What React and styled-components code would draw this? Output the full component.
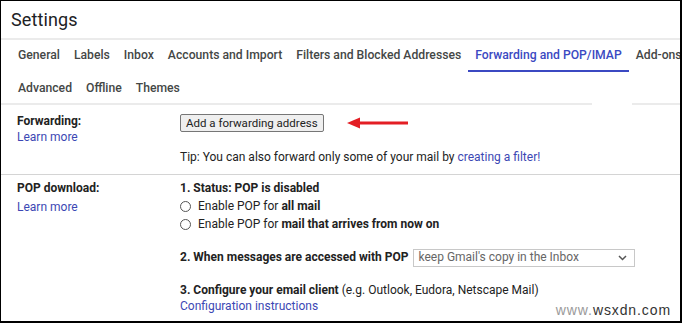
import React from "react";
import styled, { createGlobalStyle } from "styled-components";

const Global = createGlobalStyle`
  html, body { margin: 0; padding: 0; background: #fff; }
  * { box-sizing: border-box; }
  body { font-family: Roboto, "Liberation Sans", Arial, sans-serif; }
`;

const Frame = styled.div`
  position: relative;
  width: 682px;
  height: 323px;
  overflow: hidden;
  border-style: solid;
  border-color: #000;
  border-width: 1px 2px 2px 1px;
  background: #fff;
`;

const Header = styled.div`
  height: 37px;
  padding-left: 10px;
  display: flex;
  align-items: center;
  font-size: 18px;
  color: #202124;
  letter-spacing: 0.1px;
`;

const Rule = styled.div`
  height: ${(p) => p.$h || 1}px;
  background: ${(p) => p.$bg || "#ebebeb"};
`;

const TabRow = styled.div`
  display: flex;
  height: ${(p) => p.$h}px;
  padding-left: 10px;
  white-space: nowrap;
  overflow: hidden;
`;

const Tab = styled.div`
  padding: 0 7px;
  display: flex;
  align-items: center;
  font-size: 12.2px;
  font-weight: 500;
  color: ${(p) => (p.$active ? "#3b49c2" : "#444746")};
  border-bottom: 2px solid ${(p) => (p.$active ? "#3b49c2" : "transparent")};
  padding-top: ${(p) => p.$pt ?? 0}px;
`;

const Section = styled.div`
  display: grid;
  grid-template-columns: 163px 1fr;
  padding: ${(p) => p.$pad};
  padding-left: 16px;
  font-size: 12px;
  color: #222;
  border-bottom: ${(p) => (p.$border ? "1px solid #d4d4d4" : "none")};
`;

const LabelCol = styled.div`
  display: flex;
  flex-direction: column;
  gap: ${(p) => p.$gap || 0}px;
`;

const Label = styled.div`
  font-weight: 700;
  line-height: ${(p) => p.$lh || 16}px;
  color: #222;
`;

const Link = styled.a`
  color: #3c48b4;
  text-decoration: none;
  line-height: ${(p) => p.$lh || 16}px;
  display: ${(p) => (p.$inline ? "inline" : "block")};
`;

const ValueCol = styled.div`
  display: flex;
  flex-direction: column;
`;

const ButtonRow = styled.div`
  display: flex;
  align-items: center;
  margin-top: 1px;
`;

const Button = styled.button`
  height: 18px;
  padding: 0 5px;
  font-family: Roboto, "Liberation Sans", Arial, sans-serif;
  font-size: 11.5px;
  color: #222;
  background: #efefef;
  border: 1px solid #767676;
  border-radius: 2px;
  line-height: 16px;
`;

const Arrow = styled.svg`
  margin-left: 23px;
  display: block;
`;

const Text = styled.div`
  line-height: ${(p) => p.$lh || 16}px;
  margin-top: ${(p) => p.$mt || 0}px;
  color: #222;
  display: flex;
  align-items: center;
`;

const B = styled.b`
  font-weight: 700;
  white-space: pre;
`;

const Radio = styled.span`
  width: 11px;
  height: 11px;
  border: 1px solid #555;
  border-radius: 50%;
  margin-right: 7px;
  flex: none;
`;

const Select = styled.div`
  margin-left: 5px;
  width: 222px;
  height: 18px;
  border: 1px solid #c8c8c8;
  display: flex;
  align-items: center;
  justify-content: space-between;
  padding: 0 7px 0 4px;
  color: #666;
  font-weight: 400;
  font-size: 12px;
`;

const Watermark = styled.div`
  position: absolute;
  right: 9px;
  bottom: 3px;
  font-family: "Liberation Sans", Arial, sans-serif;
  font-size: 14px;
  letter-spacing: 0.9px;
  color: #333;
`;

const WmLight = styled.span`
  color: #9a9a9a;
`;

const tabs1 = [
  "General",
  "Labels",
  "Inbox",
  "Accounts and Import",
  "Filters and Blocked Addresses",
  "Forwarding and POP/IMAP",
  "Add-ons",
];
const tabs2 = ["Advanced", "Offline", "Themes"];

export default function App() {
  return (
    <>
      <Global />
      <Frame>
        <Header>Settings</Header>
        <Rule $h={2} />
        <TabRow $h={32}>
          {tabs1.map((t) => (
            <Tab key={t} $active={t === "Forwarding and POP/IMAP"}>
              {t}
            </Tab>
          ))}
        </TabRow>
        <TabRow $h={31}>
          {tabs2.map((t) => (
            <Tab key={t} $pt={2}>
              {t}
            </Tab>
          ))}
        </TabRow>
        <Rule
          $h={2}
          $bg="linear-gradient(90deg, #ebebeb 0 591px, #fff 591px 631px, #ebebeb 631px)"
        />
        <Section $pad="8px 0 9px 0" $border>
          <LabelCol>
            <Label>Forwarding:</Label>
            <Link href="#">Learn more</Link>
          </LabelCol>
          <ValueCol>
            <ButtonRow>
              <Button>Add a forwarding address</Button>
              <Arrow width="62" height="12" viewBox="0 0 62 12">
                <path d="M0 6 L13 0.5 L13 11.5 Z" fill="#e31e24" />
                <rect x="12" y="4.5" width="49" height="3" fill="#e31e24" />
              </Arrow>
            </ButtonRow>
            <Text $mt={17}>
              Tip: You can also forward only some of your mail by&nbsp;
              <Link href="#" $inline>
                creating a filter!
              </Link>
            </Text>
          </ValueCol>
        </Section>
        <Section $pad="4px 0 0 0">
          <LabelCol $gap={1}>
            <Label $lh={18}>POP download:</Label>
            <Link href="#" $lh={18}>
              Learn more
            </Link>
          </LabelCol>
          <ValueCol>
            <Text $lh={18}>
              <B>1. Status: POP is disabled</B>
            </Text>
            <Text $lh={18}>
              <Radio />
              Enable POP for&nbsp;<B>all mail</B>
            </Text>
            <Text $lh={18}>
              <Radio />
              Enable POP for&nbsp;<B>mail that arrives from now on</B>
            </Text>
            <Text $lh={19} $mt={15}>
              <B>2. When messages are accessed with POP</B>
              <Select>
                <span>keep Gmail's copy in the Inbox</span>
                <svg width="9" height="6" viewBox="0 0 9 6">
                  <path d="M1 1 L4.5 4.5 L8 1" stroke="#555" strokeWidth="1.5" fill="none" />
                </svg>
              </Select>
            </Text>
            <Text $mt={15}>
              <B>3. Configure your email client</B>&nbsp;(e.g. Outlook, Eudora, Netscape Mail)
            </Text>
            <Link href="#">Configuration instructions</Link>
          </ValueCol>
        </Section>
        <Watermark>
          <WmLight>www.</WmLight>wsxdn.com
        </Watermark>
      </Frame>
    </>
  );
}
